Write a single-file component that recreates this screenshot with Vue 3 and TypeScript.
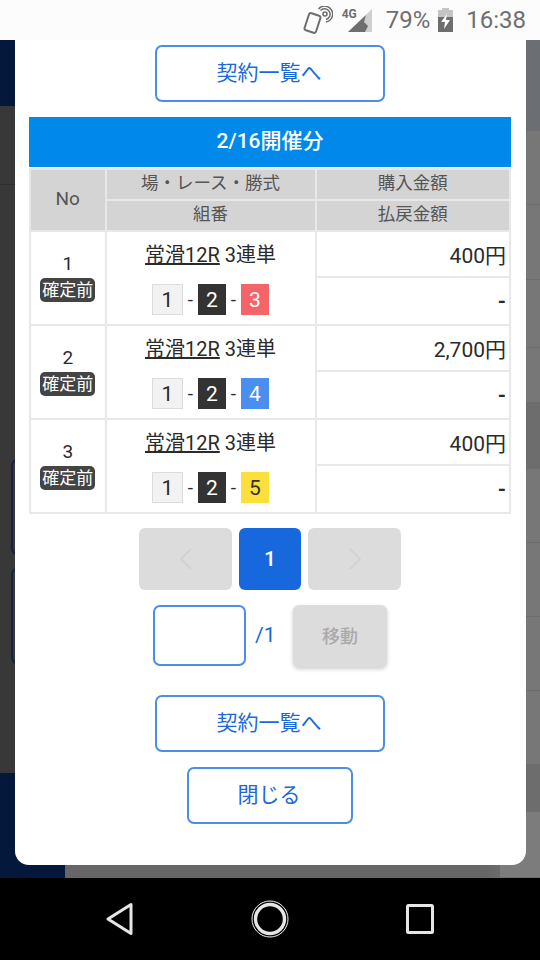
<script setup lang="ts">
interface Contract {
  no: number
  amount: string
  third: number
  thirdClass: string
}

const contracts: Contract[] = [
  { no: 1, amount: "400円", third: 3, thirdClass: "red" },
  { no: 2, amount: "2,700円", third: 4, thirdClass: "blue" },
  { no: 3, amount: "400円", third: 5, thirdClass: "yellow" },
]

// heights of the rows of the page that shows beside the dialog
const bands = [
  { h: 91, tone: "#6b6e73" },
  { h: 74, tone: "#777" },
  { h: 75, tone: "#777" },
  { h: 68, tone: "#777" },
  { h: 55, tone: "#777" },
  { h: 66, tone: "#6d6d6d" },
  { h: 74, tone: "#777" },
  { h: 74, tone: "#777" },
  { h: 74, tone: "#777" },
  { h: 74, tone: "#777" },
  { h: 47, tone: "#6d6d6d" },
  { h: 66, tone: "#7c7c7c" },
]
</script>

<template>
  <div class="screen">
    <header class="status">
      <svg class="nfc" width="30" height="28" viewBox="0 0 30 28" fill="none" stroke="#6e6e6e">
        <rect x="3.5" y="8" width="12" height="18" rx="2" stroke-width="2" transform="rotate(18 9.5 17)" />
        <circle cx="22" cy="8" r="2" stroke-width="1.6" />
        <path d="M17.5 4.5a5.5 5.5 0 1 1 5.5 9" stroke-width="1.5" />
        <path d="M15.5 3a8 8 0 1 1 7.5 13" stroke-width="1.5" />
      </svg>
      <span class="net">4G</span>
      <svg class="signal" width="24" height="24" viewBox="0 0 24 24">
        <path d="M0 23 24 0v23z" fill="#cfcfcf" />
        <path d="M0 23 18 6l-2 7 4 4-3 6z" fill="#6e6e6e" />
      </svg>
      <span class="pct">79%</span>
      <svg class="battery" width="15" height="24" viewBox="0 0 15 24">
        <path d="M4 0h7v2h4v7H0V2h4z" fill="#c4c4c4" />
        <path d="M0 9h15v15H0z" fill="#6e6e6e" />
        <path d="M9 6 3 14h4l-1 7 6-9H8z" fill="#fff" />
      </svg>
      <span class="time">16:38</span>
    </header>

    <main class="viewport">
      <div class="page">
        <div class="page-left">
          <div class="navy-top"></div>
          <div class="page-rule"></div>
          <div class="ghost-btn first"></div>
          <div class="ghost-btn second"></div>
          <div class="navy-bottom"></div>
        </div>
        <div class="page-right">
          <div
            v-for="(band, i) in bands"
            :key="i"
            class="band"
            :style="{ height: band.h + 'px', background: band.tone }"
          ></div>
        </div>
      </div>

      <section class="modal">
        <button type="button" class="outline wide">契約一覧へ</button>

        <div class="title">2/16開催分</div>
        <table>
          <colgroup>
            <col class="col-no" />
            <col class="col-race" />
            <col />
          </colgroup>
          <thead>
            <tr>
              <th rowspan="2" class="th-no">No</th>
              <th>場・レース・勝式</th>
              <th>購入金額</th>
            </tr>
            <tr>
              <th>組番</th>
              <th>払戻金額</th>
            </tr>
          </thead>
          <tbody v-for="item in contracts" :key="item.no">
            <tr class="upper">
              <td rowspan="2" class="no">
                <div class="no-value">{{ item.no }}</div>
                <span class="badge">確定前</span>
              </td>
              <td rowspan="2" class="race">
                <div class="race-name"><u>常滑12R</u> 3連単</div>
                <div class="combo">
                  <span class="num white">1</span>
                  <i>-</i>
                  <span class="num black">2</span>
                  <i>-</i>
                  <span class="num" :class="item.thirdClass">{{ item.third }}</span>
                </div>
              </td>
              <td class="money">{{ item.amount }}</td>
            </tr>
            <tr class="lower">
              <td class="money dash">-</td>
            </tr>
          </tbody>
        </table>

        <nav class="pager">
          <button type="button" class="page-btn arrow" disabled>
            <svg width="14" height="22" viewBox="0 0 14 22" fill="none" stroke="#d0d0d0" stroke-width="1.5"><path d="M12 1 2 11l10 10" /></svg>
          </button>
          <button type="button" class="page-btn current">1</button>
          <button type="button" class="page-btn arrow" disabled>
            <svg width="14" height="22" viewBox="0 0 14 22" fill="none" stroke="#d0d0d0" stroke-width="1.5"><path d="m2 1 10 10L2 21" /></svg>
          </button>
        </nav>

        <div class="jump">
          <input type="text" />
          <span class="total">/1</span>
          <button type="button" class="move" disabled>移動</button>
        </div>

        <button type="button" class="outline wide again">契約一覧へ</button>
        <button type="button" class="outline close">閉じる</button>
      </section>
    </main>

    <footer class="navbar">
      <svg width="30" height="34" viewBox="0 0 30 34" fill="none" stroke="#e6e6e6" stroke-width="3" stroke-linejoin="round"><path d="M26 2.500v29L3 17z" /></svg>
      <svg width="38" height="38" viewBox="0 0 38 38" fill="none">
        <circle cx="19" cy="19" r="18" stroke="#f2f2f2" stroke-width="1" />
        <circle cx="19" cy="19" r="14.500" stroke="#e6e6e6" stroke-width="3.400" />
      </svg>
      <svg width="28" height="30" viewBox="0 0 28 30" fill="none" stroke="#e6e6e6" stroke-width="3" stroke-linejoin="round"><rect x="1.500" y="1.500" width="25" height="27" rx="1" /></svg>
    </footer>
  </div>
</template>

<style scoped>
.screen {
  display: flex;
  flex-direction: column;
  font-family: Roboto, "Noto Sans CJK JP", sans-serif;
  height: 960px;
  overflow: hidden;
  width: 540px;
}

.status {
  align-items: center;
  background: #fcfcfc;
  color: #6e6e6e;
  display: flex;
  flex: 0 0 40px;
  justify-content: flex-end;
  padding-right: 14px;
}

.nfc {
  margin-right: 9px;
}

.net {
  align-self: flex-start;
  font-size: 12px;
  font-weight: 700;
  margin-right: -8px;
  margin-top: 7px;
  width: 14px;
}

.signal {
  margin-right: 14px;
  margin-top: 2px;
}

.pct {
  font-size: 24px;
  margin-right: 8px;
}

.battery {
  margin-right: 13px;
}

.time {
  font-size: 24px;
}

.viewport {
  flex: 1;
  position: relative;
}

.page {
  background: linear-gradient(90deg, #666 90%, #7c7c7c);
  display: flex;
  height: 100%;
  justify-content: space-between;
}

.page-left {
  background: #383838;
  position: relative;
  width: 65px;
}

.navy-top {
  background: #03183a;
  height: 66px;
}

.page-rule {
  border-bottom: 1px solid #2e2e2e;
  height: 78px;
}

.ghost-btn {
  border: 2px solid #14233f;
  border-radius: 8px;
  height: 94px;
  margin-left: 11px;
  width: 30px;
}

.ghost-btn.first {
  margin-top: 273px;
}

.ghost-btn.second {
  margin-top: 11px;
}

.navy-bottom {
  background: #03183a;
  bottom: 0;
  height: 105px;
  position: absolute;
  width: 100%;
}

.page-right {
  display: flex;
  flex-direction: column;
  width: 40px;
}

.band {
  border-bottom: 1px solid #6c6c6c;
  box-sizing: border-box;
}

.modal {
  align-items: center;
  background: #fff;
  border-radius: 0 0 14px 14px;
  bottom: 13px;
  box-sizing: border-box;
  display: flex;
  flex-direction: column;
  left: 14.5px;
  padding: 5px 14.5px 0;
  position: absolute;
  top: 0;
  width: 511px;
}

.outline {
  background: #fff;
  border: 2px solid #4d8de8;
  border-radius: 7px;
  box-sizing: border-box;
  color: #1a68dc;
  font-family: inherit;
  font-size: 21px;
  height: 57px;
  padding: 0 2px 5px 0;
}

.wide {
  width: 230px;
}

.title {
  align-items: center;
  background: #0089eb;
  box-sizing: border-box;
  color: #fff;
  display: flex;
  font-size: 21px;
  font-weight: 500;
  height: 50px;
  justify-content: center;
  margin-top: 15px;
  padding-bottom: 6px;
  width: 482px;
}

table {
  border-collapse: collapse;
  color: #2a2a2a;
  margin-top: 1px;
  table-layout: fixed;
  width: 482px;
}

.col-no {
  width: 75.5px;
}

.col-race {
  width: 210px;
}

th,
td {
  border: 2px solid #e8e8e8;
  padding: 0;
  text-align: center;
}

th {
  background: #d4d4d4;
  color: #555;
  font-size: 17.5px;
  font-weight: 400;
  height: 26px;
  line-height: 20px;
  padding-bottom: 3px;
}

.th-no {
  font-size: 19px;
}

.upper td.money {
  height: 44px;
}

.lower td.money {
  height: 46px;
}

.no {
  font-size: 19px;
}

.no-value {
  line-height: 20px;
  margin-bottom: 4px;
}

.badge {
  background: #444;
  border-radius: 5px;
  color: #fff;
  display: block;
  font-size: 17px;
  line-height: 24px;
  margin: 0 auto;
  width: 55px;
}

.race-name {
  font-size: 20px;
  line-height: 28px;
}

.combo {
  align-items: center;
  display: flex;
  justify-content: center;
  margin-top: 15px;
}

.combo i {
  font-style: normal;
  font-size: 19px;
  width: 15px;
}

.num {
  align-items: center;
  box-sizing: border-box;
  display: flex;
  font-size: 21px;
  height: 31px;
  justify-content: center;
  width: 28px;
}

.num.white {
  background: #f2f2f2;
  border: 1px solid #dcdcdc;
  width: 31px;
}

.num.black {
  background: #333;
  color: #fff;
}

.num.red {
  background: #f46468;
  color: #fff;
}

.num.blue {
  background: #4a8ef0;
  color: #fff;
}

.num.yellow {
  background: #fbdf3a;
  color: #333;
}

.money {
  font-size: 21px;
  padding-right: 3px;
  text-align: right;
}

.dash {
  font-weight: 700;
}

.pager {
  display: flex;
  gap: 7px;
  margin-top: 14px;
}

.page-btn {
  align-items: center;
  border: none;
  border-radius: 6px;
  display: flex;
  font-family: inherit;
  height: 62px;
  justify-content: center;
  padding: 0;
}

.arrow {
  background: #dcdcdc;
  width: 93px;
}

.current {
  background: #1768dc;
  color: #fff;
  font-size: 21px;
  font-weight: 500;
  width: 62px;
}

.jump {
  align-items: flex-start;
  display: flex;
  margin-top: 15px;
}

.jump input {
  background: #fff;
  border: 2px solid #4d8de8;
  border-radius: 7px;
  box-sizing: border-box;
  height: 61px;
  width: 93px;
}

.total {
  color: #1a68dc;
  font-size: 21px;
  line-height: 60px;
  margin-left: 9px;
  width: 38px;
}

.move {
  background: #dcdcdc;
  border: none;
  border-radius: 6px;
  box-shadow: 0 2px 4px rgba(0, 0, 0, 0.2);
  color: #aaa;
  font-family: inherit;
  font-size: 18px;
  font-weight: 500;
  height: 62px;
  padding: 0 0 3px;
  width: 94px;
}

.again {
  margin-top: 28px;
}

.close {
  margin-top: 15px;
  width: 166px;
}

.navbar {
  align-items: center;
  background: #000;
  display: grid;
  flex: 0 0 82px;
  grid-template-columns: repeat(3, 150px);
  justify-content: center;
  justify-items: center;
}
</style>

<style>
body {
  margin: 0;
}
</style>
